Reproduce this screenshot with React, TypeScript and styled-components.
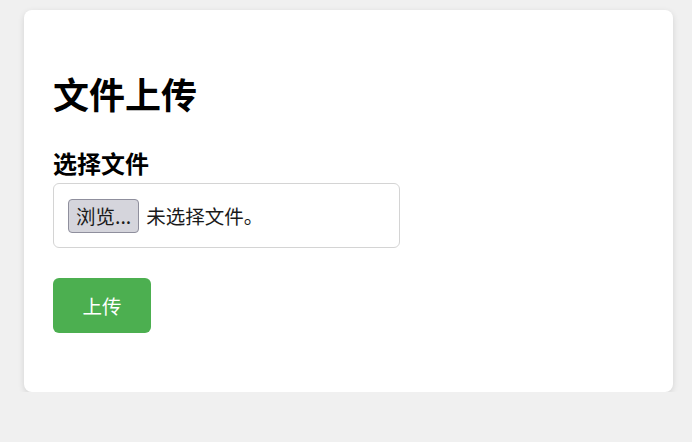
import React from 'react';
import styled, { createGlobalStyle } from 'styled-components';

const GlobalStyle = createGlobalStyle`
  html, body {
    margin: 0;
    padding: 0;
    background: #f0f0f0;
    font-family: "Noto Sans CJK SC", "Noto Sans", sans-serif;
    color: #000;
  }
`;

const Page = styled.div`
  padding: 10px 19px 0 24px;
`;

const Card = styled.div`
  background: #fff;
  border-radius: 8px;
  box-shadow: 0 2px 6px rgba(0, 0, 0, 0.12);
  padding: 29px;
  height: 382px;
  box-sizing: border-box;
`;

const Title = styled.h1`
  margin: 33px 0 34px;
  font-size: 36px;
  line-height: 42px;
  font-weight: 700;
`;

const Label = styled.label`
  display: block;
  font-size: 24px;
  line-height: 29px;
  font-weight: 700;
  margin-bottom: 6px;
`;

const FileBox = styled.div`
  width: 347px;
  height: 65px;
  box-sizing: border-box;
  border: 1px solid #d4d4d4;
  border-radius: 6px;
  padding: 0 14px;
  display: flex;
  align-items: center;
  gap: 7px;
`;

const BrowseButton = styled.span`
  display: inline-flex;
  align-items: center;
  height: 34px;
  box-sizing: border-box;
  padding: 0 7px;
  background: #d5d5dc;
  border: 1px solid #8f8f9d;
  border-radius: 4px;
  font-size: 19.5px;
  color: #1a1a1a;
`;

const FileName = styled.span`
  font-size: 19.5px;
  color: #1a1a1a;
`;

const UploadButton = styled.button`
  margin-top: 30px;
  width: 98px;
  height: 55px;
  border: none;
  border-radius: 6px;
  background: #4caf50;
  color: #fff;
  font-family: inherit;
  font-size: 19.5px;
  cursor: pointer;
`;

export default function App() {
  return (
    <>
      <GlobalStyle />
      <Page>
        <Card>
          <Title>文件上传</Title>
          <Label>选择文件</Label>
          <FileBox>
            <BrowseButton>浏览...</BrowseButton>
            <FileName>未选择文件。</FileName>
          </FileBox>
          <UploadButton>上传</UploadButton>
        </Card>
      </Page>
    </>
  );
}
